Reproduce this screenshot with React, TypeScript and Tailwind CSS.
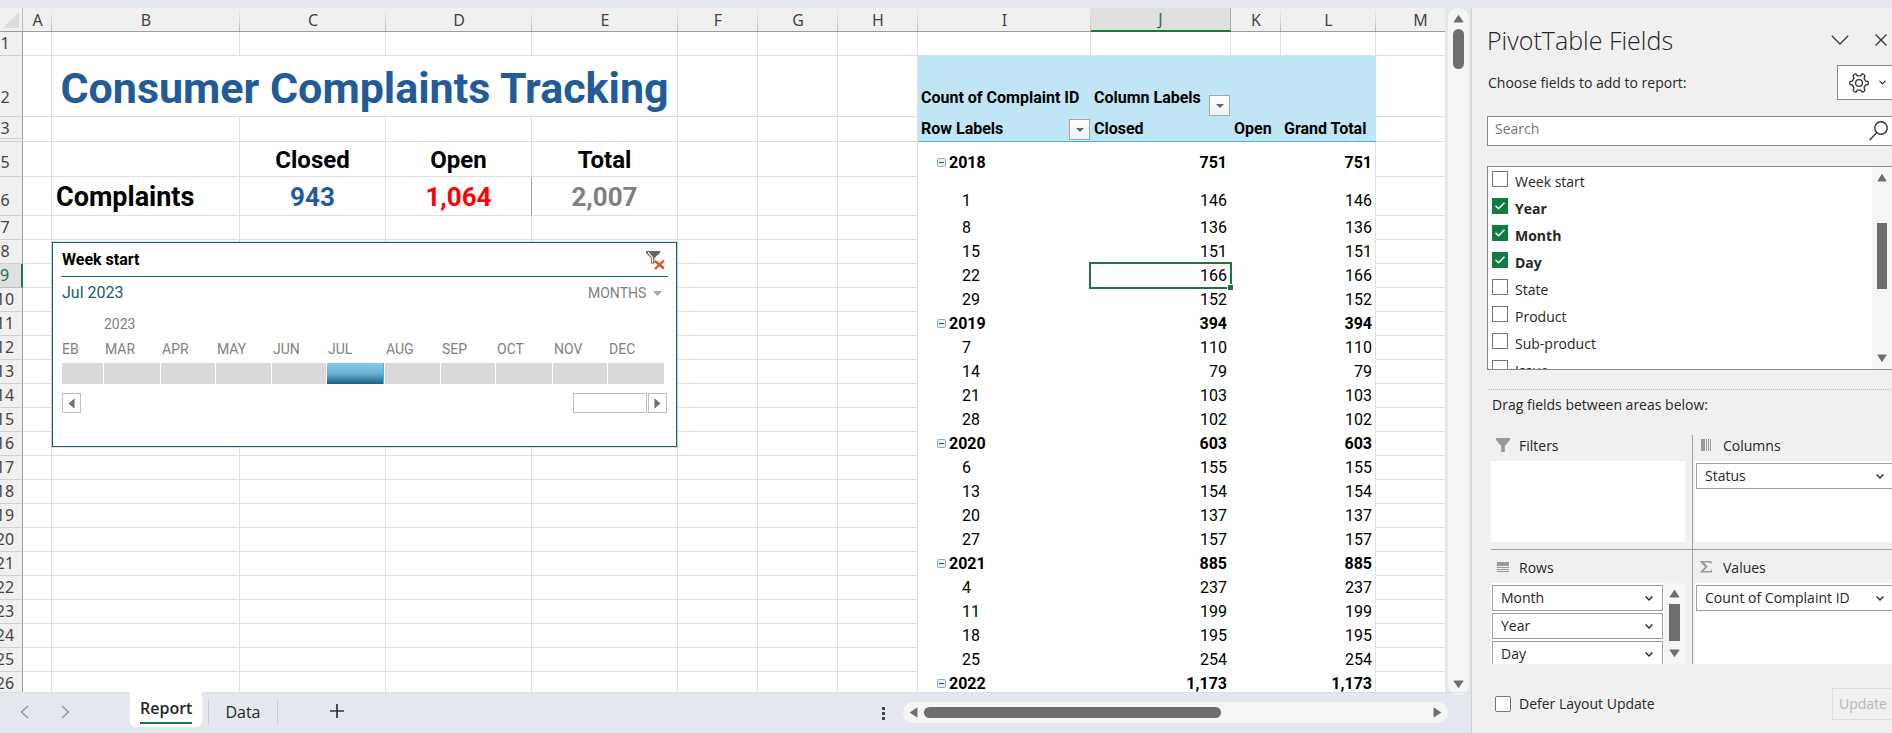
import { useState } from "react";
import type { ReactNode } from "react";

type PivotRow = { row: number; label: string; value: string; year?: boolean };

const PIVOT_ROWS: PivotRow[] = [
  { row: 7, label: "8", value: "136" },
  { row: 8, label: "15", value: "151" },
  { row: 9, label: "22", value: "166" },
  { row: 10, label: "29", value: "152" },
  { row: 11, label: "2019", value: "394", year: true },
  { row: 12, label: "7", value: "110" },
  { row: 13, label: "14", value: "79" },
  { row: 14, label: "21", value: "103" },
  { row: 15, label: "28", value: "102" },
  { row: 16, label: "2020", value: "603", year: true },
  { row: 17, label: "6", value: "155" },
  { row: 18, label: "13", value: "154" },
  { row: 19, label: "20", value: "137" },
  { row: 20, label: "27", value: "157" },
  { row: 21, label: "2021", value: "885", year: true },
  { row: 22, label: "4", value: "237" },
  { row: 23, label: "11", value: "199" },
  { row: 24, label: "18", value: "195" },
  { row: 25, label: "25", value: "254" },
  { row: 26, label: "2022", value: "1,173", year: true },
];

const COLUMNS = ["A", "B", "C", "D", "E", "F", "G", "H", "I", "J", "K", "L", "M"];

const CELL = "border-b border-r border-[#e0e0e0] p-0 align-baseline";
const PIVOT_HEAD = "bg-[#c0e6f5] p-0 px-[3px] text-left align-baseline font-bold whitespace-nowrap";
const UI_FONT = "font-['Open_Sans','Noto_Sans',sans-serif]";

function Triangle({ dir, className }: { dir: "up" | "down" | "left" | "right"; className: string }) {
  const d = {
    up: "M5 0.8 9.4 8.6Q9.6 9.4 8.8 9.4H1.2Q.4 9.4 .6 8.6Z",
    down: "M5 9.2 9.4 1.4Q9.6 .6 8.8 .6H1.2Q.4 .6 .6 1.4Z",
    left: "M.8 5 8.6 .6Q9.4 .4 9.4 1.2V8.8Q9.4 9.6 8.6 9.4Z",
    right: "M9.2 5 1.4 .6Q.6 .4 .6 1.2V8.8Q.6 9.6 1.4 9.4Z",
  }[dir];
  return (
    <svg viewBox="0 0 10 10" preserveAspectRatio="none" className={className} fill="currentColor" aria-hidden="true">
      <path d={d} />
    </svg>
  );
}

function FilterButton({ label }: { label: string }) {
  return (
    <button
      type="button"
      aria-label={label}
      className="absolute right-px bottom-px flex size-[21px] items-center justify-center border border-[#a6a6a6] bg-linear-to-b from-white to-[#eef1f6]"
    >
      <svg viewBox="0 0 8 4" className="h-1 w-2" fill="#666" aria-hidden="true">
        <path d="M0 0H8L4 4Z" />
      </svg>
    </button>
  );
}

function CollapseIcon() {
  return (
    <svg viewBox="0 0 9 9" className="mr-[3px] mb-px inline-block size-[9px] align-baseline" aria-hidden="true">
      <rect x=".5" y=".5" width="8" height="8" rx="1" fill="#e8edf5" stroke="#9aa8c4" />
      <path d="M2 4.5H7" stroke="#2f4a80" />
    </svg>
  );
}

function RowHead({ n, className = "" }: { n: number; className?: string }) {
  const active = n === 9;
  return (
    <th
      scope="row"
      className={`p-0 pt-px text-center align-baseline font-['Noto_Sans',sans-serif] text-base leading-5 font-normal ${
        active
          ? "border-r-2 border-b border-r-[#107c41] border-b-[#bdbdbd] bg-[#e0e0e0] text-[#217346]"
          : `border-r border-r-[#9d9d9d] border-b-[#cfcfcf] bg-[#f0f0f0] text-[#444] ${className || "border-b"}`
      }`}
    >
      {n}
    </th>
  );
}

function Blank({ count }: { count: number }) {
  return (
    <>
      {Array.from({ length: count }, (_, i) => (
        <td key={i} className={CELL} />
      ))}
    </>
  );
}

function PivotCells({ label, value, year, selected }: { label: string; value: string; year?: boolean; selected?: boolean }) {
  const weight = year ? "font-bold" : "font-normal";
  return (
    <>
      <td className={`p-0 pt-px align-baseline ${year ? "pl-[19px] font-bold" : "pl-11"}`}>
        {year && <CollapseIcon />}
        {label}
      </td>
      <td className={`relative p-0 pt-px pr-1 text-right align-baseline ${weight}`}>
        {value}
        {selected && (
          <span className="absolute -top-0.5 -right-px -bottom-px -left-0.5 border-2 border-[#217346]">
            <span className="absolute -right-[3px] -bottom-[3px] size-[6px] border-t border-l border-white bg-[#217346]" />
          </span>
        )}
      </td>
      <td className="p-0" />
      <td className={`border-r border-[#e0e0e0] p-0 pt-px pr-[3px] text-right align-baseline ${weight}`}>{value}</td>
    </>
  );
}

function Sheet() {
  return (
    <div className="-mr-5 -ml-3">
      <table className="w-full table-fixed border-separate border-spacing-0 font-[Roboto,sans-serif] text-base leading-[22px] text-black">
        <colgroup>
          <col className="w-[35px]" />
          <col className="w-[29px]" />
          <col className="w-[188px]" />
          <col className="w-[146px]" />
          <col className="w-[146px]" />
          <col className="w-[146px]" />
          <col className="w-20" />
          <col className="w-20" />
          <col className="w-20" />
          <col className="w-[173px]" />
          <col className="w-[140px]" />
          <col className="w-[50px]" />
          <col className="w-[95px]" />
          <col />
        </colgroup>
        <thead>
          <tr className="h-6">
            <th className="border-r border-b border-r-[#bdbdbd] border-b-[#9d9d9d] bg-[#f0f0f0] p-0">
              <svg viewBox="0 0 16 16" className="mr-[3px] ml-auto size-4" fill="#dcdcdc" aria-label="Select all">
                <path d="M16 0V16H0Z" />
              </svg>
            </th>
            {COLUMNS.map((c) => (
              <th
                key={c}
                scope="col"
                className={`p-0 font-['Noto_Sans',sans-serif] text-base leading-5 font-normal ${
                  c === "J"
                    ? "border-r border-b-2 border-r-[#ababab] border-b-[#107c41] bg-[#e0e0e0] text-[#217346]"
                    : "border-b border-[#9d9d9d] bg-[#f0f0f0] bg-[linear-gradient(to_bottom,#f0f0f0,#bdbdbd)] bg-[length:1px_100%] bg-right bg-no-repeat text-[#444]"
                }`}
              >
                {c}
              </th>
            ))}
          </tr>
        </thead>
        <tbody>
          <tr className="h-6">
            <RowHead n={1} />
            <Blank count={13} />
          </tr>
          <tr className="h-[61px]">
            <RowHead n={2} />
            <Blank count={1} />
            <td
              colSpan={4}
              className={`${CELL} pt-[5px] text-center text-[43px] leading-[55px] font-bold whitespace-nowrap text-[#215c98]`}
            >
              Consumer Complaints Tracking
            </td>
            <Blank count={3} />
            <td className={PIVOT_HEAD}>Count of Complaint ID</td>
            <td className={`${PIVOT_HEAD} relative`}>
              Column Labels
              <FilterButton label="Filter column labels" />
            </td>
            <td className={PIVOT_HEAD} />
            <td className={PIVOT_HEAD} />
            <Blank count={1} />
          </tr>
          <tr className="h-6">
            <RowHead n={3} className="border-b-4 border-double" />
            <Blank count={8} />
            <td className={`${PIVOT_HEAD} relative border-b border-[#44b3e1] pt-px`}>
              Row Labels
              <FilterButton label="Filter row labels" />
            </td>
            <td className={`${PIVOT_HEAD} border-b border-[#44b3e1] pt-px`}>Closed</td>
            <td className={`${PIVOT_HEAD} border-b border-[#44b3e1] pt-px`}>Open</td>
            <td className={`${PIVOT_HEAD} border-b border-[#44b3e1] pt-px`}>Grand Total</td>
            <Blank count={1} />
          </tr>
          <tr className="h-[35px]">
            <RowHead n={5} />
            <Blank count={2} />
            <td className={`${CELL} pt-0.5 text-center text-2xl leading-8 font-bold`}>Closed</td>
            <td className={`${CELL} pt-0.5 text-center text-2xl leading-8 font-bold`}>Open</td>
            <td className={`${CELL} pt-0.5 text-center text-2xl leading-8 font-bold`}>Total</td>
            <Blank count={3} />
            <PivotCells label="2018" value="751" year />
            <Blank count={1} />
          </tr>
          <tr className="h-[39px]">
            <RowHead n={6} />
            <Blank count={1} />
            <td className={`${CELL} pt-0.5 pl-1 text-[27px] leading-9 font-bold`}>Complaints</td>
            <td className={`${CELL} pt-0.5 text-center text-[26px] leading-9 font-bold text-[#215c98]`}>943</td>
            <td className="border-r border-b border-r-[#a0a0a0] border-b-[#e0e0e0] p-0 pt-0.5 text-center align-baseline text-[26px] leading-9 font-bold text-[#ff0000]">
              1,064
            </td>
            <td className={`${CELL} pt-0.5 text-center text-[26px] leading-9 font-bold text-[#808080]`}>2,007</td>
            <Blank count={3} />
            <PivotCells label="1" value="146" />
            <Blank count={1} />
          </tr>
          {PIVOT_ROWS.map((r) => (
            <tr key={r.row} className="h-6">
              <RowHead n={r.row} />
              <Blank count={8} />
              <PivotCells label={r.label} value={r.value} year={r.year} selected={r.row === 9} />
              <Blank count={1} />
            </tr>
          ))}
        </tbody>
      </table>
    </div>
  );
}

const MONTHS: { name: string; col: string }[] = [
  { name: "EB", col: "w-[43px]" },
  { name: "MAR", col: "w-[57px]" },
  { name: "APR", col: "w-[55px]" },
  { name: "MAY", col: "w-14" },
  { name: "JUN", col: "w-[55px]" },
  { name: "JUL", col: "w-[58px]" },
  { name: "AUG", col: "w-14" },
  { name: "SEP", col: "w-[55px]" },
  { name: "OCT", col: "w-[57px]" },
  { name: "NOV", col: "w-[55px]" },
  { name: "DEC", col: "w-[57px]" },
];

function Timeline() {
  return (
    <section
      aria-label="Week start timeline"
      className="absolute top-[234px] left-[52px] h-[205px] w-[625px] border border-[#156082] bg-white px-2 font-[Roboto,sans-serif] outline outline-[#156082]/15"
    >
      <header className="flex h-[34px] items-center justify-between border-b border-[#156082] pr-0.5 pl-px">
        <h2 className="text-base leading-5 font-bold text-black">Week start</h2>
        <button type="button" aria-label="Clear filter">
          <svg viewBox="0 0 20 20" className="size-5" aria-hidden="true">
            <path d="M0 1H14V3L8.500 8V13.500H5V8L0 3Z" fill="#666" />
            <path d="M2 2.200 6.500 7.500V12.500" fill="none" stroke="#fff" strokeWidth="1.200" />
            <path d="M9 11 18 18.500M18 10.500 9 19" stroke="#e0532d" strokeWidth="2.400" />
          </svg>
        </button>
      </header>
      <div className="flex h-8 items-center justify-between pl-px">
        <span className="text-base leading-5 text-[#215a75]">Jul 2023</span>
        <label className="flex items-center gap-1.5 pr-1.5">
          <select
            aria-label="Time level"
            className="appearance-none bg-transparent text-sm leading-5 text-[#7f7f7f]"
          >
            <option>MONTHS</option>
          </select>
          <svg viewBox="0 0 9 5" className="h-[5px] w-[9px]" fill="#a6a6a6" aria-hidden="true">
            <path d="M0 0H9L4.500 5Z" />
          </svg>
        </label>
      </div>
      <div className="flex h-[29px] items-center pl-[43px] text-sm leading-5 text-[#7f7f7f]">2023</div>
      <div className="flex">
        {MONTHS.map((m) => (
          <button key={m.name} type="button" className={`${m.col} shrink-0 text-left`}>
            <span className="flex h-[22px] items-center pl-px text-sm leading-5 text-[#7f7f7f]">{m.name}</span>
            <span
              className={`mt-[3px] mr-px block h-[21px] ${
                m.name === "JUL"
                  ? "border-r border-[#44b3e1] bg-linear-to-b from-[#83caeb] via-[#6ab2d3] to-[#156082]"
                  : "bg-[#d9d9d9]"
              } ${m.name === "EB" ? "ml-px" : ""}`}
            />
          </button>
        ))}
      </div>
      <div className="mt-[9px] flex justify-between pr-px pl-px">
        <button
          type="button"
          aria-label="Scroll earlier"
          className="flex h-5 w-[19px] items-center justify-center border border-[#bfbfbf] text-[#707070]"
        >
          <Triangle dir="left" className="h-[11px] w-[7px]" />
        </button>
        <div className="flex gap-px">
          <div className="h-5 w-[74px] border border-[#bfbfbf]" />
          <button
            type="button"
            aria-label="Scroll later"
            className="flex h-5 w-[19px] items-center justify-center border border-[#bfbfbf] text-[#707070]"
          >
            <Triangle dir="right" className="h-[11px] w-[7px]" />
          </button>
        </div>
      </div>
    </section>
  );
}

function VerticalScroll() {
  return (
    <div className="-mb-[3px] ml-[3px] flex w-[21px] shrink-0 flex-col items-center justify-between rounded-full bg-[#f5f5f5] py-1.5 text-[#6e6e6e]">
      <div className="flex flex-col items-center gap-1.5">
        <Triangle dir="up" className="h-[9px] w-[11px]" />
        <div className="h-10 w-[11px] rounded-md bg-[#6e6e6e]" />
      </div>
      <Triangle dir="down" className="h-[9px] w-[11px]" />
    </div>
  );
}

function SheetBar() {
  return (
    <footer className={`flex h-[41px] shrink-0 items-start border-t border-[#dcdfe6] ${UI_FONT} text-[#262626]`}>
      <button type="button" aria-label="Previous sheet" className="mt-3 ml-5 text-[#9a9a9a]">
        <svg viewBox="0 0 9 14" className="h-3.5 w-[9px]" fill="none" stroke="currentColor" strokeWidth="1.500">
          <path d="M8 1 1.500 7 8 13" />
        </svg>
      </button>
      <button type="button" aria-label="Next sheet" className="mt-3 ml-8 text-[#9a9a9a]">
        <svg viewBox="0 0 9 14" className="h-3.5 w-[9px]" fill="none" stroke="currentColor" strokeWidth="1.500">
          <path d="M1 1 7.500 7 1 13" />
        </svg>
      </button>
      <nav aria-label="Sheets" className="ml-[60px] flex items-start">
        <a href="#report" aria-current="page" className="-mt-px block rounded-b-md bg-white px-2.5 pt-1 pb-[3px]">
          <span className="block border-b-2 border-[#107c41] pb-0.5 text-base leading-6 font-semibold">Report</span>
        </a>
        <a href="#data" className="mt-[7px] ml-1.5 block border-x border-[#c9ccd2] px-4 text-base leading-6">
          Data
        </a>
      </nav>
      <button type="button" aria-label="New sheet" className="mt-[11px] ml-[52px]">
        <svg viewBox="0 0 14 14" className="size-3.5" stroke="#333" strokeWidth="1.700">
          <path d="M7 0V14M0 7H14" />
        </svg>
      </button>
      <span className="ml-auto flex flex-col gap-0.5 pt-[14px]">
        <i className="block size-[3px] bg-[#444]" />
        <i className="block size-[3px] bg-[#444]" />
        <i className="block size-[3px] bg-[#444]" />
      </span>
      <div className="mt-[9px] mr-[23px] ml-[18px] flex h-[21px] w-[545px] items-center justify-between rounded-full bg-[#f5f5f5] px-1.5 text-[#6e6e6e]">
        <div className="flex items-center gap-1.5">
          <Triangle dir="left" className="h-[11px] w-[9px]" />
          <div className="h-[11px] w-[297px] rounded-md bg-[#6e6e6e]" />
        </div>
        <Triangle dir="right" className="h-[11px] w-[9px]" />
      </div>
    </footer>
  );
}

function Chevron({ className = "h-[5px] w-2" }: { className?: string }) {
  return (
    <svg viewBox="0 0 8 5" className={className} fill="none" stroke="#262626" strokeWidth="1.400" aria-hidden="true">
      <path d="M.6.6 4 4 7.400.6" />
    </svg>
  );
}

const FIELDS = ["Week start", "Year", "Month", "Day", "State", "Product", "Sub-product", "Issue"];

function FieldList() {
  const [checked, setChecked] = useState<string[]>(["Year", "Month", "Day"]);
  const toggle = (f: string) => setChecked((c) => (c.includes(f) ? c.filter((x) => x !== f) : [...c, f]));
  return (
    <div className="mt-5 flex h-[204px] overflow-hidden border border-r-0 border-[#8a8a8a] bg-white">
      <ul className="flex-1 pt-1 pl-1">
        {FIELDS.map((f) => {
          const on = checked.includes(f);
          return (
            <li key={f} className="h-[27px]">
              <label className="flex items-start gap-[7px]">
                <span className="relative size-4 shrink-0">
                  <input
                    type="checkbox"
                    checked={on}
                    onChange={() => toggle(f)}
                    className="block size-4 appearance-none border border-[#767676] bg-white checked:border-[#107c41] checked:bg-[#107c41]"
                  />
                  {on && (
                    <svg viewBox="0 0 16 16" className="absolute inset-0 size-4" fill="none" stroke="#fff" strokeWidth="1.500">
                      <path d="M3.500 7.800 6.500 10.800 12.500 4.800" />
                    </svg>
                  )}
                </span>
                <span className={`pt-px text-sm leading-5 ${on ? "font-bold" : ""}`}>{f}</span>
              </label>
            </li>
          );
        })}
      </ul>
      <div className="flex w-5 flex-col items-center bg-[#f5f5f5] py-1.5 text-[#6e6e6e]">
        <Triangle dir="up" className="h-[9px] w-2.5" />
        <div className="mt-[41px] h-[66px] w-2.5 bg-[#6e6e6e]" />
        <Triangle dir="down" className="mt-auto h-[9px] w-2.5" />
      </div>
    </div>
  );
}

function Pill({ children, open }: { children: ReactNode; open?: boolean }) {
  return (
    <button
      type="button"
      aria-haspopup="menu"
      className={`flex h-[26px] w-full shrink-0 items-center justify-between border border-[#a0a0a0] bg-white pl-2 text-sm leading-5 ${
        open ? "border-r-0 pr-2" : "pr-[9px]"
      }`}
    >
      {children}
      <Chevron />
    </button>
  );
}

function AreaTitle({ icon, children }: { icon: ReactNode; children: ReactNode }) {
  return (
    <h3 className="flex h-[26px] items-start gap-2 pl-1 text-sm leading-[22px]">
      <svg viewBox="0 0 16 16" className="mt-[2px] size-4" fill="#9a9a9a" aria-hidden="true">
        {icon}
      </svg>
      {children}
    </h3>
  );
}

function Areas() {
  return (
    <div className="mt-5 ml-1 grid grid-cols-[202px_1fr]">
      <section className="border-r border-b border-[#a0a0a0] pb-[7px]">
        <AreaTitle icon={<path d="M1 1H15V3L9.800 9V15H6.200V9L1 3Z" />}>Filters</AreaTitle>
        <div className="mr-[7px] h-[81px] bg-white" />
      </section>
      <section className="border-b border-[#a0a0a0] pb-[7px] pl-0.5">
        <AreaTitle icon={<path d="M2 2H6V14H2ZM7 2H8V14H7ZM9 2H10V14H9ZM11 2H12V14H11Z" />}>Columns</AreaTitle>
        <div className="h-[81px] bg-white pt-0.5 pl-px">
          <Pill open>Status</Pill>
        </div>
      </section>
      <section className="border-r border-[#a0a0a0] pt-[7px]">
        <AreaTitle icon={<path d="M2 3H14V7H2ZM2 8H14V9H2ZM2 10H14V11H2ZM2 12H14V13H2Z" />}>Rows</AreaTitle>
        <div className="mr-[7px] flex h-[81px] overflow-hidden bg-white">
          <div className="flex flex-1 flex-col gap-0.5 px-px pt-0.5">
            <Pill>Month</Pill>
            <Pill>Year</Pill>
            <Pill>Day</Pill>
          </div>
          <div className="flex w-[21px] flex-col items-center bg-[#f5f5f5] py-1.5 text-[#6e6e6e]">
            <Triangle dir="up" className="h-[9px] w-[11px]" />
            <div className="mt-1.5 h-[37px] w-[11px] bg-[#6e6e6e]" />
            <Triangle dir="down" className="mt-auto h-[9px] w-[11px]" />
          </div>
        </div>
      </section>
      <section className="pt-[7px] pl-0.5">
        <AreaTitle icon={<path d="M1 2H12.500V5H12Q11.500 3.400 10 3.400H5L8.800 7.600 4.600 12H10.500Q12 12 12.500 10.400H13V13.600H1V13L6 7.900 1 2.600Z" />}>
          Values
        </AreaTitle>
        <div className="h-[81px] bg-white pt-0.5 pl-px">
          <Pill open>Count of Complaint ID</Pill>
        </div>
      </section>
    </div>
  );
}

function FieldsPane() {
  return (
    <aside className={`flex w-[421px] shrink-0 flex-col border-l border-[#cdd0d6] bg-[#f0f0f0] pl-[15px] ${UI_FONT} text-[#262626]`}>
      <div className="flex items-center pt-3.5 pr-[5px]">
        <h1 className="text-[25px] leading-9 font-light">PivotTable Fields</h1>
        <button type="button" aria-label="Pane options" className="mr-[26px] ml-auto">
          <svg viewBox="0 0 18 10" className="h-2.5 w-[18px]" fill="none" stroke="#333" strokeWidth="1.300">
            <path d="M.8.8 9 9 17.200.8" />
          </svg>
        </button>
        <button type="button" aria-label="Close pane">
          <svg viewBox="0 0 12 12" className="size-3" stroke="#333" strokeWidth="1.300">
            <path d="M.5.5 11.500 11.500M11.500.5.5 11.500" />
          </svg>
        </button>
      </div>
      <div className="mt-[7px] flex h-[35px] items-center justify-between">
        <p className="pl-px text-sm leading-5">Choose fields to add to report:</p>
        <button
          type="button"
          aria-label="Tools"
          className="flex h-[35px] w-[55px] items-center gap-2.5 border border-r-0 border-[#8a8a8a] bg-white pl-[11px]"
        >
          <svg viewBox="0 0 20 20" className="size-5" fill="none" stroke="#333" strokeWidth="1.300" strokeLinejoin="round">
            <path d="M5 1.600Q6 .8 7 1L8.300 2.800H11.700L13 1Q14 .8 15 1.600Q15.800 2.200 15.900 3L15 5.200 16.700 8.100 19 8.500Q19.600 10 19 11.500L16.700 11.900 15 14.800 15.900 17Q15.800 17.800 15 18.400Q14 19.200 13 19L11.700 17.200H8.300L7 19Q6 19.200 5 18.400Q4.200 17.800 4.100 17L5 14.800 3.300 11.900 1 11.500Q.4 10 1 8.500L3.300 8.100 5 5.200 4.100 3Q4.200 2.200 5 1.600Z" />
            <circle cx="10" cy="10" r="3.400" />
          </svg>
          <Chevron className="h-[5px] w-[7px]" />
        </button>
      </div>
      <label className="mt-4 flex h-[30px] items-center border border-r-0 border-[#8a8a8a] bg-white pr-1 pl-[7px]">
        <input
          type="search"
          aria-label="Search fields"
          placeholder="Search"
          className="min-w-0 flex-1 bg-transparent pb-1 text-sm leading-5 outline-none placeholder:text-[#767676]"
        />
        <svg viewBox="0 0 19 20" className="h-5 w-[19px]" fill="none" stroke="#333" strokeWidth="1.400" aria-hidden="true">
          <circle cx="12" cy="7" r="6.200" />
          <path d="M7.600 11.600.6 19.200" />
        </svg>
      </label>
      <FieldList />
      <div className="mt-[19px] ml-0.5 border-t border-dotted border-[#b5b5b5]" />
      <p className="mt-[5px] ml-[5px] text-sm leading-5">Drag fields between areas below:</p>
      <Areas />
      <div className="mt-6 ml-2 flex h-8 items-center justify-between">
        <label className="flex items-center gap-2 text-sm leading-5">
          <input type="checkbox" className="size-4 appearance-none rounded-xs border border-[#767676] bg-white" />
          Defer Layout Update
        </label>
        <button
          type="button"
          disabled
          className="h-8 w-[60px] border border-r-0 border-[#dcdcdc] pl-1.5 text-left text-sm leading-5 text-[#b8b8b8]"
        >
          Update
        </button>
      </div>
    </aside>
  );
}

export default function App() {
  return (
    <div className="flex h-screen w-full flex-col overflow-hidden bg-[#e4e7ee] pt-2">
      <div className="flex min-h-0 flex-1">
        <main className="flex min-w-0 flex-1 flex-col">
          <div className="flex min-h-0 flex-1 pr-0.5">
            <div className="relative min-w-0 flex-1 overflow-hidden bg-white">
              <Sheet />
              <Timeline />
            </div>
            <VerticalScroll />
          </div>
          <SheetBar />
        </main>
        <FieldsPane />
      </div>
    </div>
  );
}
